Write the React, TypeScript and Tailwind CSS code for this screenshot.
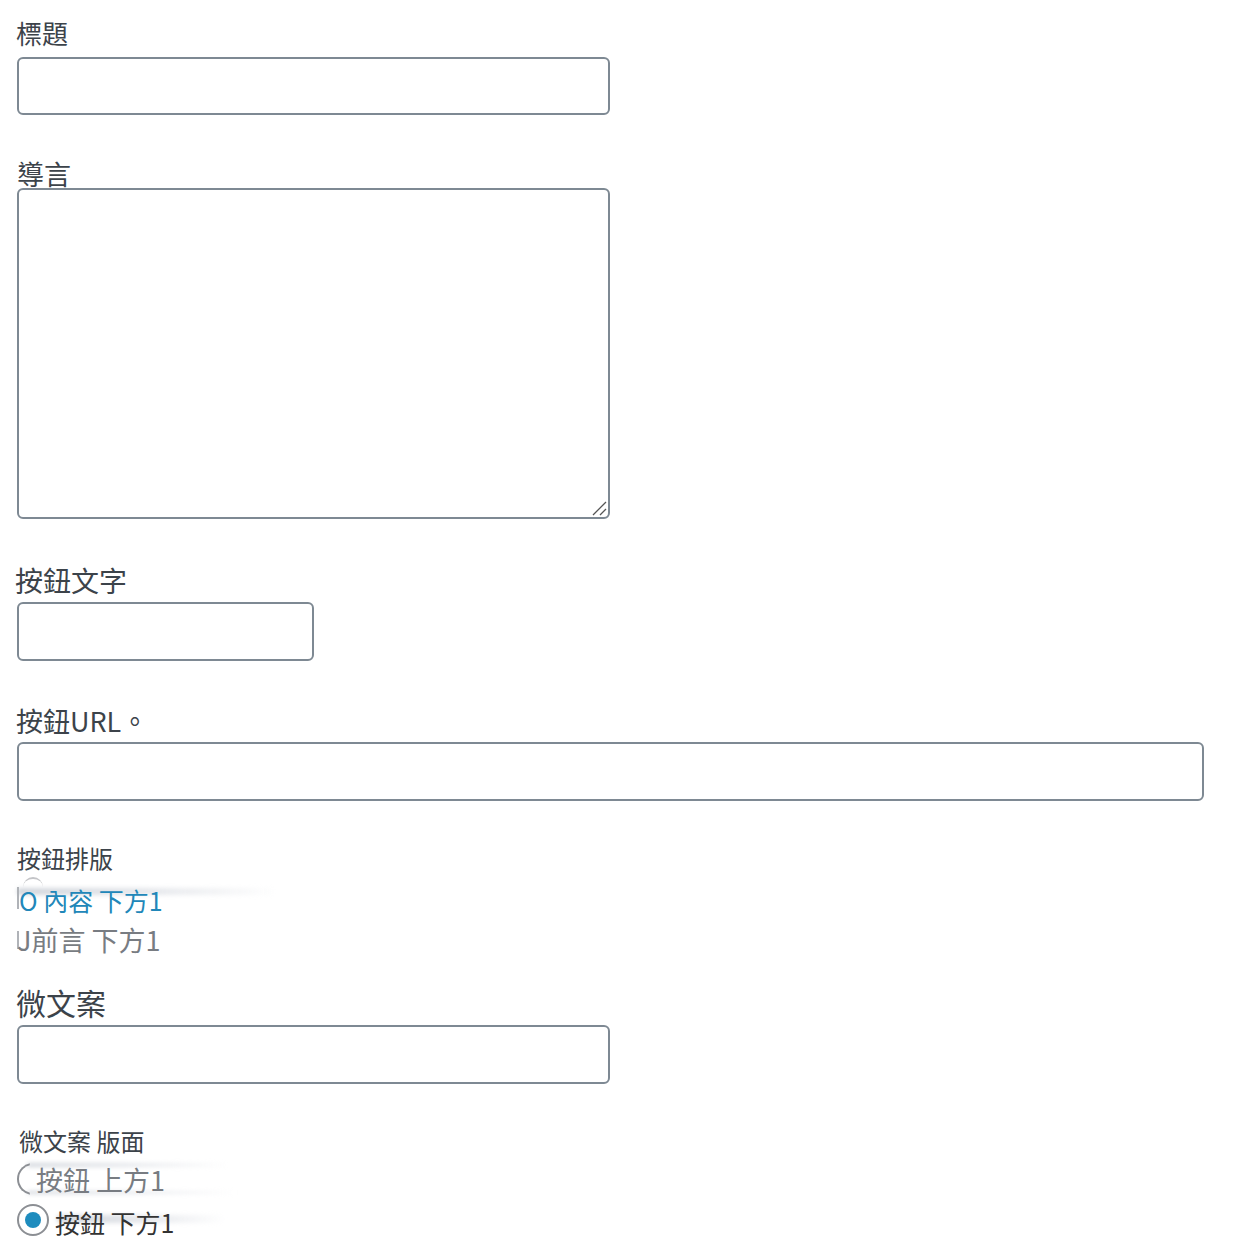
import React from "react";

const font = { fontFamily: '"Noto Sans CJK TC", "Noto Sans", sans-serif' };

function Smear({ className }: { className: string }) {
  return (
    <div
      className={
        "pointer-events-none absolute rounded-full bg-gradient-to-r from-gray-300 via-gray-200 to-transparent blur-[2px] " +
        className
      }
    />
  );
}

export default function App() {
  return (
    <div
      className="min-h-[1260px] w-[1241px] bg-white pl-[17px] text-[#3c434a]"
      style={font}
    >
      <div className="flex flex-col items-start">
        <label className="-ml-px mt-[17px] block text-[26px] leading-[32px]">
          標題
        </label>
        <input
          type="text"
          className="mt-[8px] h-[58px] w-[593px] rounded-md border-2 border-[#7e8993] bg-white"
        />

        <label className="mt-[43px] block text-[27px] leading-[32px]">
          導言
        </label>
        <div className="relative -mt-[2px]">
          <textarea className="block h-[331px] w-[593px] resize-none rounded-md border-2 border-[#7e8993] bg-white" />
          <svg
            className="pointer-events-none absolute bottom-[3px] right-[3px]"
            width="16"
            height="16"
            viewBox="0 0 16 16"
          >
            <path d="M2 15 L15 2 M9 15 L15 9" stroke="#555" strokeWidth="1.3" />
          </svg>
        </div>

        <label className="-ml-[2px] mt-[44px] block text-[28px] leading-[34px]">
          按鈕文字
        </label>
        <input
          type="text"
          className="mt-[5px] h-[59px] w-[297px] rounded-md border-2 border-[#7e8993] bg-white"
        />

        <label className="-ml-px mt-[44px] block text-[27px] leading-[32px]">
          按鈕URL。
        </label>
        <input
          type="text"
          className="mt-[5px] h-[59px] w-[1187px] rounded-md border-2 border-[#7e8993] bg-white"
        />

        <label className="mt-[42px] block text-[24px] leading-[30px]">
          按鈕排版
        </label>
        <div className="relative mt-[12px] h-[30px] w-[300px]">
          <div className="absolute -top-[8px] left-[6px] h-[14px] w-[20px] rounded-t-full border-t-2 border-[#c3c4c7]" />
          <Smear className="left-0 top-[3px] h-[7px] w-[260px]" />
          <div className="absolute left-0 top-[2px] h-[22px] w-[2px] bg-[#b0b3b8]" />
          <span className="relative ml-[2px] block text-[25px] leading-[30px] text-[#2187b9]">
            O 內容 下方1
          </span>
        </div>
        <div className="relative mt-[10px] h-[30px] w-[300px]">
          <div className="absolute left-0 top-[6px] h-[18px] w-[2px] bg-[#b0b3b8]" />
          <span className="relative block text-[27px] leading-[30px] text-[#787c82]">
            J前言 下方1
          </span>
        </div>

        <label className="-ml-px mt-[29px] block text-[30px] leading-[36px]">
          微文案
        </label>
        <input
          type="text"
          className="mt-[5px] h-[59px] w-[593px] rounded-md border-2 border-[#7e8993] bg-white"
        />

        <label className="ml-[2px] mt-[42px] block text-[24px] leading-[30px]">
          微文案 版面
        </label>
        <div className="relative mt-[7px] h-[34px] w-[300px]">
          <Smear className="left-[10px] top-0 h-[4px] w-[200px]" />
          <Smear className="left-[10px] top-[28px] h-[3px] w-[210px]" />
          <div className="absolute left-0 top-0 h-[32px] w-[32px] rounded-full border-2 border-r-0 border-[#8c8f94] [clip-path:inset(0_60%_0_0)]" />
          <span className="relative ml-[19px] block pt-[2px] text-[27px] leading-[30px] text-[#787c82]">
            按鈕 上方1
          </span>
        </div>
        <div className="relative mt-[6px] flex h-[34px] w-[300px] items-center">
          <Smear className="left-[40px] top-[12px] h-[8px] w-[170px]" />
          <div className="relative flex h-[32px] w-[32px] items-center justify-center rounded-full border-2 border-[#8c8f94] bg-white">
            <div className="h-[16px] w-[16px] rounded-full bg-[#1e8cbe]" />
          </div>
          <span className="relative ml-[6px] block pt-[4px] text-[25px] leading-[30px] text-[#333]">
            按鈕 下方1
          </span>
        </div>
      </div>
    </div>
  );
}
